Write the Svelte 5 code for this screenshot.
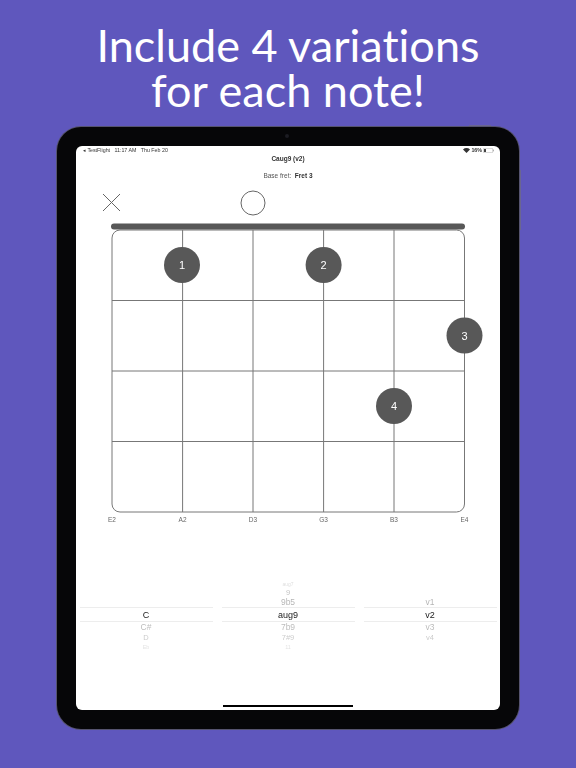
<script>
  const columns = [82.6, 153, 223.6, 294];
  const rows = [114.5, 185, 255.5];
  const strings = [
    { x: 36, name: "E2" },
    { x: 106.6, name: "A2" },
    { x: 177, name: "D3" },
    { x: 247.6, name: "G3" },
    { x: 318, name: "B3" },
    { x: 388.5, name: "E4" }
  ];
  const fingers = [
    { x: 106, y: 79, n: 1 },
    { x: 247.6, y: 79, n: 2 },
    { x: 388.5, y: 149.5, n: 3 },
    { x: 318, y: 220, n: 4 }
  ];
  const pickers = [
    ["", "", "", "C", "C#", "D", "Eb"],
    ["aug7", "9", "9b5", "aug9", "7b9", "7#9", "11"],
    ["", "", "v1", "v2", "v3", "v4", ""]
  ];
</script>

<div class="page">
  <h1>Include 4 variations<br />for each note!</h1>

  <div class="device">
    <span class="camera"></span>
    <span class="btn-top"></span>
    <span class="btn-side"></span>
    <div class="screen">
      <div class="status">
        <span>◂ TestFlight&nbsp;&nbsp; 11:17 AM&nbsp;&nbsp; Thu Feb 20</span>
        <span class="status-right">
          <svg width="7" height="5" viewBox="0 0 14 10"><path d="M7 10 0 3a10 10 0 0 1 14 0z" fill="#333" /></svg>
          <b>16%</b>
          <svg width="11" height="5" viewBox="0 0 22 10"><rect x=".5" y=".5" width="19" height="9" rx="2.5" fill="none" stroke="#999" /><rect x="2" y="2" width="4" height="6" fill="#444" /><rect x="20.5" y="3.5" width="1.5" height="3" fill="#999" /></svg>
        </span>
      </div>
      <div class="title">Caug9 (v2)</div>
      <div class="base">Base fret:&nbsp; <b>Fret 3</b></div>

      <svg class="diagram" width="423" height="340" viewBox="0 0 423 340">
        <path d="M27 8 44 25M44 8 27 25" stroke="#666" stroke-width="1" fill="none" />
        <circle cx="177" cy="17" r="12" fill="none" stroke="#666" stroke-width="1" />
        <rect x="36" y="44" width="352.5" height="282" rx="8" fill="none" stroke="#777" stroke-width="1" />
        {#each columns as x}
          <line x1={x + 24} x2={x + 24} y1="44" y2="326" stroke="#777" stroke-width="1" />
        {/each}
        {#each rows as y}
          <line x1="36" x2="388.5" y1={y} y2={y} stroke="#777" stroke-width="1" />
        {/each}
        <rect x="35" y="37.5" width="354" height="6" rx="3" fill="#58585a" />
        {#each fingers as f}
          <circle cx={f.x} cy={f.y} r="18" fill="#58585a" />
          <text class="finger" x={f.x} y={f.y + 4}>{f.n}</text>
        {/each}
        {#each strings as s}
          <text class="string" x={s.x} y="336">{s.name}</text>
        {/each}
      </svg>

      <div class="pickers">
        {#each pickers as col}
          <div class="picker">
            {#each col as label, i}
              <div class="slot s{i}">{label}</div>
            {/each}
          </div>
        {/each}
      </div>

      <div class="home"><span></span></div>
    </div>
  </div>
</div>

<style>
  :global(body) {
    margin: 0;
    background: #5f57bd;
  }

  .page {
    width: 576px;
    height: 768px;
    overflow: hidden;
    display: flex;
    flex-direction: column;
    align-items: center;
    background: #5f57bd;
    font-family: "Liberation Sans", Arial, sans-serif;
  }

  h1 {
    margin: 23px 0 0;
    height: 104px;
    font-family: Lato, sans-serif;
    font-weight: 400;
    font-size: 45px;
    line-height: 45px;
    font-variant-ligatures: none;
    text-align: center;
    color: #fff;
  }

  .device {
    position: relative;
    box-sizing: border-box;
    width: 462px;
    height: 602px;
    padding: 19px;
    border-radius: 24px;
    background: #060608;
    box-shadow: 0 0 0 1px #55536f;
  }

  .camera {
    position: absolute;
    top: 7px;
    left: 228px;
    width: 4px;
    height: 4px;
    border-radius: 50%;
    background: #1c1c22;
  }

  .btn-top {
    position: absolute;
    top: -2px;
    left: 412px;
    width: 22px;
    height: 1px;
    background: #6a6690;
  }

  .btn-side {
    position: absolute;
    top: 43px;
    right: -2px;
    width: 1px;
    height: 60px;
    background: #6a6690;
  }

  .screen {
    display: flex;
    flex-direction: column;
    height: 564px;
    border-radius: 6px;
    background: #fff;
    overflow: hidden;
    filter: grayscale(1);
  }

  .status {
    display: flex;
    justify-content: space-between;
    align-items: center;
    height: 8px;
    padding: 0 6px 0 7px;
    font-size: 5.3px;
    color: #333;
    white-space: nowrap;
  }

  .status-right {
    display: flex;
    align-items: center;
    gap: 1px;
  }

  .title {
    height: 10px;
    line-height: 10px;
    text-align: center;
    font-size: 6.5px;
    font-weight: 700;
    color: #333;
  }

  .base {
    height: 10px;
    margin-top: 7px;
    line-height: 10px;
    text-align: center;
    font-size: 6.5px;
    color: #555;
  }

  .base b {
    color: #333;
  }

  .diagram {
    display: block;
    margin-top: 5px;
  }

  .finger {
    font-size: 11px;
    text-anchor: middle;
    fill: #fff;
  }

  .string {
    font-size: 6.5px;
    text-anchor: middle;
    fill: #666;
  }

  .pickers {
    display: grid;
    grid-template-columns: repeat(3, 133px);
    gap: 9px;
    justify-content: center;
    margin-top: 54px;
  }

  .picker {
    display: flex;
    flex-direction: column;
  }

  .slot {
    display: flex;
    align-items: center;
    justify-content: center;
    color: #000;
  }

  .s0 { height: 8px; font-size: 5px; opacity: 0.14; }
  .s1 { height: 9px; font-size: 7.5px; opacity: 0.26; }
  .s2 { height: 10px; font-size: 8.5px; opacity: 0.3; }
  .s3 {
    box-sizing: border-box;
    height: 15px;
    font-size: 9px;
    color: #222;
    border-top: 1px solid #ededed;
    border-bottom: 1px solid #ededed;
  }
  .s4 { height: 10px; font-size: 8.5px; opacity: 0.28; }
  .s5 { height: 11px; font-size: 7.5px; opacity: 0.22; }
  .s6 { height: 7px; font-size: 5.5px; opacity: 0.12; }

  .home {
    display: flex;
    justify-content: center;
    margin-top: auto;
    padding-bottom: 3px;
  }

  .home span {
    width: 130px;
    height: 2px;
    background: #000;
  }
</style>
